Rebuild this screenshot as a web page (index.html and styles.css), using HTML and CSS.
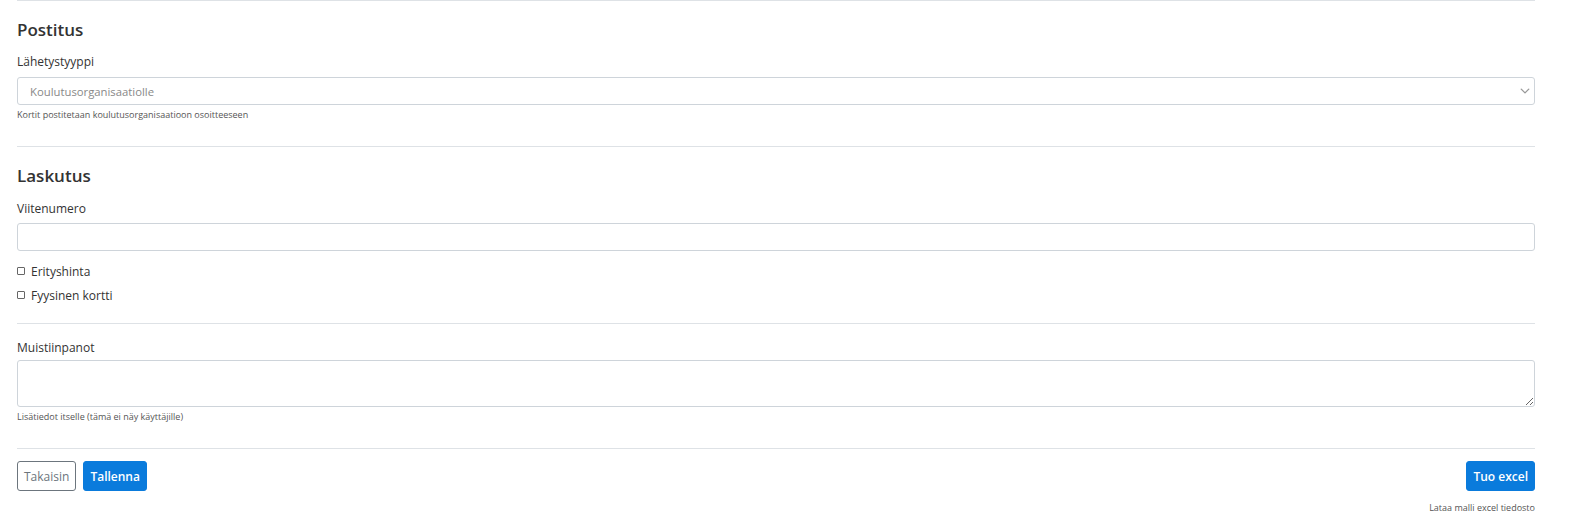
FILE: index.html
```html
<!DOCTYPE html>
<html>
<head>
  <title>Kortin tilaus</title>
  <link rel="stylesheet" href="styles.css">
</head>
<body>
  <div class="page">
    <hr class="divider first">

    <h2 class="section-title">Postitus</h2>
    <label class="field-label" for="sendType">Lähetystyyppi</label>
    <div class="select-wrap">
      <select id="sendType" class="form-control select">
        <option>Koulutusorganisaatiolle</option>
      </select>
      <svg class="chevron" width="10" height="10" viewBox="0 0 16 16"><path d="M2 5l6 6 6-6" fill="none" stroke="#999" stroke-width="2.2" stroke-linecap="round" stroke-linejoin="round"/></svg>
    </div>
    <div class="help">Kortit postitetaan koulutusorganisaatioon osoitteeseen</div>

    <hr class="divider">

    <h2 class="section-title">Laskutus</h2>
    <label class="field-label label-ref" for="reference">Viitenumero</label>
    <input type="text" id="reference" class="form-control input">

    <div class="checks">
      <label class="check"><input type="checkbox"> Erityshinta</label>
      <label class="check"><input type="checkbox"> Fyysinen kortti</label>
    </div>

    <hr class="divider mid">

    <label class="field-label label-notes" for="notes">Muistiinpanot</label>
    <textarea id="notes" class="form-control textarea"></textarea>
    <div class="help">Lisätiedot itselle (tämä ei näy käyttäjille)</div>

    <hr class="divider">

    <div class="actions">
      <div class="left">
        <button class="btn btn-outline">Takaisin</button>
        <button class="btn btn-primary">Tallenna</button>
      </div>
      <div class="right">
        <button class="btn btn-primary">Tuo excel</button>
        <a href="#" class="template-link">Lataa malli excel tiedosto</a>
      </div>
    </div>
  </div>
</body>
</html>
```

FILE: styles.css
```css
body {
  margin: 0;
  font-family: "Open Sans", Arial, sans-serif;
  color: #333;
  background: #fff;
}

.page {
  display: flex;
  flex-direction: column;
  padding: 0 34px 0 17px;
}

.divider {
  border: none;
  border-top: 1px solid #dee2e6;
  margin: 0;
  margin-top: 24px;
  width: 100%;
}

.divider.first {
  margin-top: 0;
}

.divider.mid {
  margin-top: 18px;
}

.section-title {
  font-size: 17px;
  font-weight: 600;
  line-height: 22px;
  margin: 18px 0 0;
  color: #333;
}

.field-label {
  font-size: 12px;
  line-height: 18px;
  margin-top: 12px;
  color: #333;
}

.label-ref {
  margin-top: 13px;
}

.label-notes {
  margin-top: 15px;
}

.form-control {
  box-sizing: border-box;
  width: 100%;
  border: 1px solid #ced4da;
  border-radius: 3px;
  background: #fff;
  font-family: inherit;
  font-size: 12px;
  color: #333;
  margin: 0;
}

.select-wrap {
  position: relative;
  margin-top: 6px;
}

.select {
  appearance: none;
  -webkit-appearance: none;
  height: 28px;
  padding: 0 12px;
  font-size: 11.3px;
  color: #888;
}

.chevron {
  position: absolute;
  right: 5px;
  top: 9px;
  pointer-events: none;
}

.input {
  height: 28px;
  margin-top: 5px;
  padding: 0 12px;
}

.textarea {
  height: 47px;
  margin-top: 3px;
  resize: vertical;
  display: block;
}

.help {
  font-size: 9px;
  line-height: 14px;
  color: #555;
  margin-top: 3px;
}

.checks {
  display: flex;
  flex-direction: column;
  gap: 6px;
  margin-top: 12px;
}

.check {
  font-size: 12px;
  line-height: 18px;
  display: flex;
  align-items: center;
  gap: 6px;
}

.check input {
  appearance: none;
  -webkit-appearance: none;
  margin: 0 0 2px;
  width: 8px;
  height: 8px;
  border: 1px solid #666;
  border-radius: 1px;
  background: #fff;
}

.actions {
  display: flex;
  justify-content: space-between;
  align-items: flex-start;
  margin-top: 12px;
}

.left {
  display: flex;
  gap: 7px;
}

.right {
  display: flex;
  flex-direction: column;
  align-items: flex-end;
  gap: 10px;
}

.btn {
  font-family: inherit;
  font-size: 12px;
  height: 30px;
  padding: 0 6px;
  border-radius: 3px;
  cursor: pointer;
}

.btn-outline {
  background: #fff;
  border: 1px solid #6c757d;
  color: #6c757d;
}

.btn-primary {
  background: #0a7bdc;
  border: 1px solid #0a7bdc;
  color: #fff;
  font-weight: 600;
}

.template-link {
  font-size: 9px;
  line-height: 14px;
  color: #555;
  text-decoration: none;
}
```
